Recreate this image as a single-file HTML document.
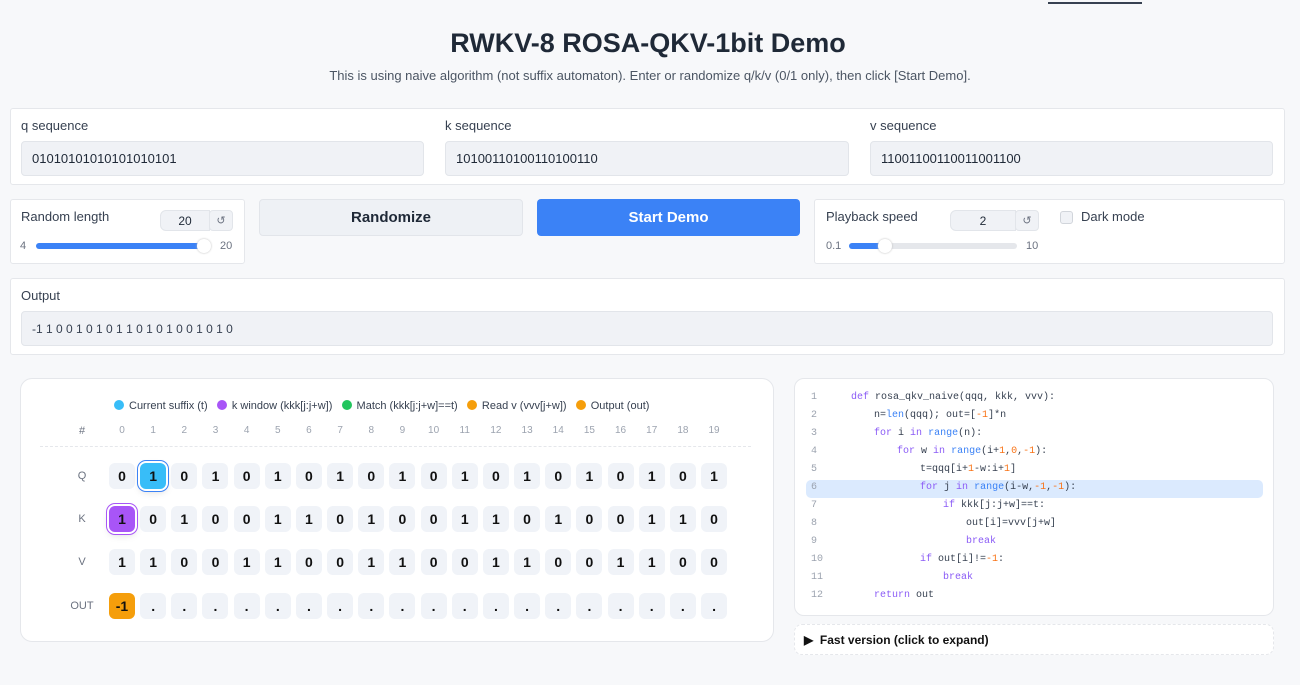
<!DOCTYPE html>
<html><head><meta charset="utf-8"><style>
*{box-sizing:border-box;margin:0;padding:0}
body{width:1300px;height:685px;background:#f7f8fa;font-family:"Liberation Sans",sans-serif;color:#1f2937;position:relative;overflow:hidden}
.a{position:absolute}
.card{position:absolute;background:#fff;border:1px solid #e5e7eb;border-radius:3px}
.lbl{font-size:13px;color:#374151}
.inp{position:absolute;background:#f0f2f6;border:1px solid #e2e5ea;border-radius:4px;font-size:13px;color:#1f2937;padding-left:10px;display:flex;align-items:center}
.cell{position:absolute;width:26px;height:26px;border-radius:6px;background:#f0f3f8;font-size:14px;font-weight:bold;display:flex;align-items:center;justify-content:center;color:#111}
.hd{position:absolute;font-size:10px;color:#9ca3af;width:26px;text-align:center}
.rl{position:absolute;font-size:11px;color:#6b7280;width:40px;text-align:center}
.code{position:absolute;font-family:"Liberation Mono",monospace;font-size:10px;color:#374151;white-space:pre}
.ln{position:absolute;font-family:"Liberation Mono",monospace;font-size:10px;color:#9ca3af}
.k{color:#8b5cf6}.b{color:#3b82f6}.n{color:#f97316}
.dot{display:inline-block;width:10px;height:10px;border-radius:50%;vertical-align:-1px;margin-right:5px}
</style></head><body>
<div class="a" style="left:1048px;top:2px;width:94px;height:2px;background:#374151"></div>
<div class="a" style="left:0;top:28px;width:1296px;text-align:center;font-size:27px;font-weight:bold;color:#1f2937">RWKV-8 ROSA-QKV-1bit Demo</div>
<div class="a" style="left:0;top:68px;width:1300px;text-align:center;font-size:13px;color:#4b5563">This is using naive algorithm (not suffix automaton). Enter or randomize q/k/v (0/1 only), then click [Start Demo].</div>

<div class="card" style="left:10px;top:108px;width:1275px;height:77px"></div>
<div class="a lbl" style="left:21px;top:118px">q sequence</div>
<div class="inp" style="left:21px;top:141px;width:403px;height:35px">01010101010101010101</div>
<div class="a lbl" style="left:445px;top:118px">k sequence</div>
<div class="inp" style="left:445px;top:141px;width:404px;height:35px">10100110100110100110</div>
<div class="a lbl" style="left:870px;top:118px">v sequence</div>
<div class="inp" style="left:870px;top:141px;width:403px;height:35px">11001100110011001100</div>

<div class="card" style="left:10px;top:199px;width:235px;height:65px"></div>
<div class="a lbl" style="left:21px;top:209px">Random length</div>
<div class="inp" style="left:160px;top:210px;width:50px;height:21px;justify-content:center;padding:0;font-size:12px;border-radius:6px 0 0 6px">20</div>
<div class="inp" style="left:209px;top:210px;width:24px;height:21px;justify-content:center;padding:0;font-size:11px;color:#6b7280">↺</div>
<div class="a" style="left:20px;top:240px;font-size:11px;color:#6b7280">4</div>
<div class="a" style="left:36px;top:243px;width:165px;height:6px;background:#3b82f6;border-radius:3px"></div>
<div class="a" style="left:197px;top:239px;width:14px;height:14px;border-radius:50%;background:#fff;box-shadow:0 0 2px #bbb"></div>
<div class="a" style="left:220px;top:240px;font-size:11px;color:#6b7280">20</div>

<div class="a" style="left:259px;top:199px;width:264px;height:37px;background:#eef1f5;border:1px solid #e2e5ea;border-radius:4px;font-size:15px;font-weight:bold;display:flex;align-items:center;justify-content:center">Randomize</div>
<div class="a" style="left:537px;top:199px;width:263px;height:37px;background:#3b82f6;border-radius:4px;font-size:15px;font-weight:bold;color:#fff;display:flex;align-items:center;justify-content:center">Start Demo</div>

<div class="card" style="left:814px;top:199px;width:471px;height:65px"></div>
<div class="a lbl" style="left:826px;top:209px">Playback speed</div>
<div class="inp" style="left:950px;top:210px;width:66px;height:21px;justify-content:center;padding:0;font-size:12px;border-radius:6px 0 0 6px">2</div>
<div class="inp" style="left:1015px;top:210px;width:24px;height:21px;justify-content:center;padding:0;font-size:11px;color:#6b7280">↺</div>
<div class="a" style="left:1060px;top:211px;width:13px;height:13px;border:1px solid #d1d5db;border-radius:3px;background:#f0f2f6"></div>
<div class="a lbl" style="left:1081px;top:209px">Dark mode</div>
<div class="a" style="left:826px;top:240px;font-size:11px;color:#6b7280">0.1</div>
<div class="a" style="left:849px;top:243px;width:168px;height:6px;background:#e5e7eb;border-radius:3px"></div>
<div class="a" style="left:849px;top:243px;width:36px;height:6px;background:#3b82f6;border-radius:3px"></div>
<div class="a" style="left:878px;top:239px;width:14px;height:14px;border-radius:50%;background:#fff;box-shadow:0 0 2px #bbb"></div>
<div class="a" style="left:1026px;top:240px;font-size:11px;color:#6b7280">10</div>

<div class="card" style="left:10px;top:278px;width:1275px;height:77px"></div>
<div class="a lbl" style="left:21px;top:288px">Output</div>
<div class="inp" style="left:21px;top:311px;width:1252px;height:35px;font-size:12px;color:#374151">-1 1 0 0 1 0 1 0 1 1 0 1 0 1 0 0 1 0 1 0</div>

<div class="a" style="left:20px;top:378px;width:754px;height:264px;background:#fff;border:1px solid #e5e7eb;border-radius:12px"></div>
<div class="a" style="left:114px;top:400px;font-size:11px;color:#374151;white-space:nowrap">
<span class="dot" style="background:#38bdf8"></span>Current suffix (t) &nbsp;&nbsp;<span class="dot" style="background:#a855f7"></span>k window (kkk[j:j+w]) &nbsp;&nbsp;<span class="dot" style="background:#22c55e"></span>Match (kkk[j:j+w]==t) &nbsp;&nbsp;<span class="dot" style="background:#f59e0b"></span>Read v (vvv[j+w]) &nbsp;&nbsp;<span class="dot" style="background:#f59e0b"></span>Output (out)</div>
<div class="a" style="left:40px;top:446px;width:711px;border-top:1px dashed #e5e7eb"></div>
<div class="rl" style="left:62px;top:425px">#</div>
<div class="rl" style="left:62px;top:470px">Q</div>
<div class="rl" style="left:62px;top:513px">K</div>
<div class="rl" style="left:62px;top:556px">V</div>
<div class="rl" style="left:62px;top:600px">OUT</div>
<div id="g"></div>

<div class="a" style="left:794px;top:378px;width:480px;height:238px;background:#fff;border:1px solid #e5e7eb;border-radius:10px"></div>
<div class="a" style="left:806px;top:480px;width:457px;height:18px;background:#dbeafe;border-radius:5px"></div>
<div id="c"></div>
<div class="a" style="left:794px;top:624px;width:480px;height:31px;background:#fff;border:1px dashed #e5e7eb;border-radius:8px;font-size:12px;font-weight:bold;padding:8px 0 0 9px;color:#111">▶ &nbsp;Fast version (click to expand)</div>

<script>
var q="01010101010101010101",k="10100110100110100110",v="11001100110011001100",h="";
for(var i=0;i<20;i++){var x=109+i*31.16;
h+='<div class="hd" style="left:'+x+'px;top:425px">'+i+'</div>';
var sq=i==1?'background:#38bdf8;box-shadow:0 0 0 2px #fff,0 0 0 3px #3b82f6,0 3px 8px rgba(0,0,0,.15)':'';
var sk=i==0?'background:#a855f7;box-shadow:0 0 0 2px #fff,0 0 0 3px #a855f7,0 3px 8px rgba(0,0,0,.15)':'';
h+='<div class="cell" style="left:'+x+'px;top:463px;'+sq+'">'+q[i]+'</div>';
h+='<div class="cell" style="left:'+x+'px;top:506px;'+sk+'">'+k[i]+'</div>';
h+='<div class="cell" style="left:'+x+'px;top:549px">'+v[i]+'</div>';
h+='<div class="cell" style="left:'+x+'px;top:593px;'+(i==0?'background:#f59e0b':'')+'">'+(i==0?'-1':'.')+'</div>';}
document.getElementById('g').innerHTML=h;
var L=[[0,'<span class="k">def</span> rosa_qkv_naive(qqq, kkk, vvv):'],[1,'n=<span class="b">len</span>(qqq); out=[<span class="n">-1</span>]*n'],[1,'<span class="k">for</span> i <span class="k">in</span> <span class="b">range</span>(n):'],[2,'<span class="k">for</span> w <span class="k">in</span> <span class="b">range</span>(i+<span class="n">1</span>,<span class="n">0</span>,<span class="n">-1</span>):'],[3,'t=qqq[i+<span class="n">1</span>-w:i+<span class="n">1</span>]'],[3,'<span class="k">for</span> j <span class="k">in</span> <span class="b">range</span>(i-w,<span class="n">-1</span>,<span class="n">-1</span>):'],[4,'<span class="k">if</span> kkk[j:j+w]==t:'],[5,'out[i]=vvv[j+w]'],[5,'<span class="k">break</span>'],[3,'<span class="k">if</span> out[i]!=<span class="n">-1</span>:'],[4,'<span class="k">break</span>'],[1,'<span class="k">return</span> out']],c="";
for(var i=0;i<12;i++){var y=392+i*18;
c+='<div class="ln" style="left:811px;top:'+y+'px">'+(i+1)+'</div><div class="code" style="left:'+(851+L[i][0]*23)+'px;top:'+y+'px">'+L[i][1]+'</div>';}
document.getElementById('c').innerHTML=c;
</script>
</body></html>
